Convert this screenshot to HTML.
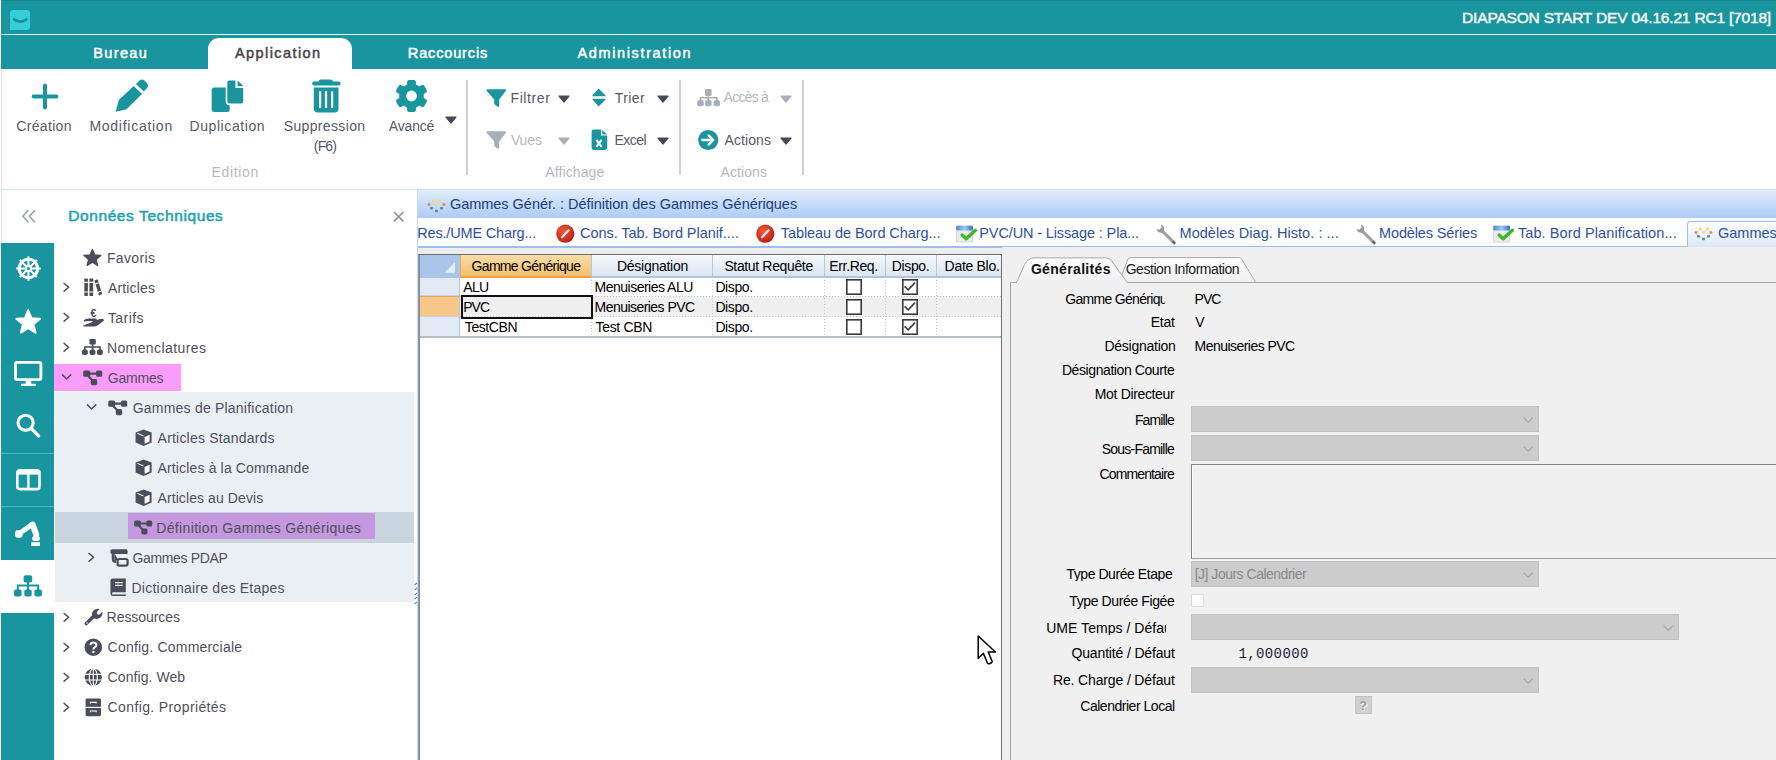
<!DOCTYPE html>
<html><head><meta charset="utf-8"><style>
*{margin:0;padding:0;box-sizing:border-box}
html,body{width:1776px;height:760px;overflow:hidden;background:#fff;position:relative}
.a{position:absolute}
.t{position:absolute;white-space:nowrap}
svg{position:absolute;overflow:visible}
</style></head><body>
<div class="a" style="left:1px;top:0px;width:1775px;height:34px;background:#1995a0;"></div>
<div class="a" style="left:1px;top:0px;width:1775px;height:1px;background:#17858f;"></div>
<div class="a" style="left:1px;top:34px;width:1775px;height:1px;background:#eef7f7;"></div>
<div class="a" style="left:1px;top:35px;width:1775px;height:34px;background:#1995a0;"></div>
<div class="a" style="left:10px;top:10px;width:20px;height:20px;background:#34cddc;border-radius:3px 3px 3px 0"></div>
<svg style="left:13px;top:18px;" width="15" height="6" viewBox="0 0 15 6"><path d="M1 1.4 Q7.2 5.8 13.6 1.4" stroke="#1a8e98" stroke-width="2.6" fill="none" stroke-linecap="round"/></svg>
<div class="a" style="left:208px;top:38px;width:144px;height:31px;background:#fff;border-radius:11px 11px 0 0"></div>
<div class="a" style="left:1px;top:189px;width:1775px;height:1px;background:#d6e2ec;"></div>
<div class="a" style="left:1px;top:69px;width:1px;height:691px;background:#e3e3e8;"></div>
<svg style="left:31px;top:83px;" width="28" height="28" viewBox="0 0 28 28"><path d="M14 2.4V24.6M2.6 13.5H25.4" stroke="#1995a0" stroke-width="4" stroke-linecap="round"/></svg>
<svg style="left:115px;top:79px;" width="34" height="34" viewBox="0 0 34 34"><path d="M0.6 32.7 L3.7 21.6 Q4 20.8 4.6 20.3 L18.7 7.0 L27 15.0 L12.3 29.6 Q11.7 30.2 10.9 30.4 Z" fill="#1995a0"/><path d="M20.9 4.9 L25 1.3 Q27.2 -0.4 29.3 1.5 L32.3 4.6 Q34.1 6.7 32.3 8.7 L28.7 12.5 Z" fill="#1995a0"/></svg>
<svg style="left:211px;top:79px;" width="34" height="34" viewBox="0 0 34 34"><rect x="0.7" y="8.5" width="18" height="24.5" rx="2.5" fill="#1995a0"/><path d="M16.2 1.0 Q16.2 0.6 17.5 0.6 H25.2 V8.3 H33 V22.6 Q33 25.4 30.5 25.4 H18.5 Q15.5 25.4 15.5 22.6 V3.3 Q15.5 0.6 18.2 0.6 Z" fill="#1995a0" stroke="#fff" stroke-width="1.6"/><path d="M26.6 1.4 L32.4 7.0 H26.6 Z" fill="#1995a0"/></svg>
<svg style="left:311px;top:79px;" width="31" height="34" viewBox="0 0 31 34"><path d="M7.6 2.6 Q8 0.6 10 0.6 H19.5 Q21.6 0.6 22 2.6 H28 Q29.6 2.6 29.6 4.6 Q29.6 6.6 28 6.6 H2.8 Q1.2 6.6 1.2 4.6 Q1.2 2.6 2.8 2.6 Z" fill="#1995a0"/><path d="M2.8 8.4 H27.5 V29.5 Q27.5 33.4 23.5 33.4 H6.8 Q2.8 33.4 2.8 29.5 Z" fill="#1995a0"/><path d="M9.1 12.2V28.9M15.0 12.2V28.9M21.1 12.2V28.9" stroke="#fff" stroke-width="2.2"/></svg>
<svg style="left:395px;top:79px;" width="34" height="34" viewBox="0 0 34 34"><circle cx="16.5" cy="17" r="12.3" fill="#1995a0"/><rect x="12.1" y="0.8999999999999986" width="8.8" height="8" rx="2" fill="#1995a0" transform="rotate(0 16.5 17)"/><rect x="12.1" y="0.8999999999999986" width="8.8" height="8" rx="2" fill="#1995a0" transform="rotate(60 16.5 17)"/><rect x="12.1" y="0.8999999999999986" width="8.8" height="8" rx="2" fill="#1995a0" transform="rotate(120 16.5 17)"/><rect x="12.1" y="0.8999999999999986" width="8.8" height="8" rx="2" fill="#1995a0" transform="rotate(180 16.5 17)"/><rect x="12.1" y="0.8999999999999986" width="8.8" height="8" rx="2" fill="#1995a0" transform="rotate(240 16.5 17)"/><rect x="12.1" y="0.8999999999999986" width="8.8" height="8" rx="2" fill="#1995a0" transform="rotate(300 16.5 17)"/><circle cx="16.5" cy="17" r="5.4" fill="#fff"/></svg>
<svg style="left:445px;top:116px;" width="12" height="8" viewBox="0 0 12 8"><path d="M1 1 H11 L6.0 7 Z" fill="#464a56" stroke="#464a56" stroke-width="1.2" stroke-linejoin="round"/></svg>
<svg style="left:558px;top:95px;" width="12" height="8" viewBox="0 0 12 8"><path d="M1 1 H11 L6.0 7 Z" fill="#464a56" stroke="#464a56" stroke-width="1.2" stroke-linejoin="round"/></svg>
<svg style="left:657px;top:95px;" width="12" height="8" viewBox="0 0 12 8"><path d="M1 1 H11 L6.0 7 Z" fill="#464a56" stroke="#464a56" stroke-width="1.2" stroke-linejoin="round"/></svg>
<svg style="left:558px;top:137px;" width="12" height="8" viewBox="0 0 12 8"><path d="M1 1 H11 L6.0 7 Z" fill="#a9aeb8" stroke="#a9aeb8" stroke-width="1.2" stroke-linejoin="round"/></svg>
<svg style="left:657px;top:137px;" width="12" height="8" viewBox="0 0 12 8"><path d="M1 1 H11 L6.0 7 Z" fill="#464a56" stroke="#464a56" stroke-width="1.2" stroke-linejoin="round"/></svg>
<svg style="left:780px;top:95px;" width="12" height="8" viewBox="0 0 12 8"><path d="M1 1 H11 L6.0 7 Z" fill="#a9aeb8" stroke="#a9aeb8" stroke-width="1.2" stroke-linejoin="round"/></svg>
<svg style="left:780px;top:137px;" width="12" height="8" viewBox="0 0 12 8"><path d="M1 1 H11 L6.0 7 Z" fill="#464a56" stroke="#464a56" stroke-width="1.2" stroke-linejoin="round"/></svg>
<div class="a" style="left:466px;top:80px;width:2px;height:95px;background:#cdd0d6;"></div>
<div class="a" style="left:679px;top:80px;width:2px;height:95px;background:#cdd0d6;"></div>
<div class="a" style="left:802px;top:80px;width:2px;height:95px;background:#cdd0d6;"></div>
<svg style="left:486px;top:88.6px;" width="22" height="19" viewBox="0 0 22 19"><path d="M1.2 0.2 H19.2 Q20.6 0.4 19.9 1.8 L13.2 10.6 V16.4 Q13 18.4 11.3 17.4 L8.6 15.2 Q8.2 14.8 8.2 14.2 V10.6 L0.6 1.8 Q-0.1 0.4 1.2 0.2 Z" fill="#1995a0"/></svg>
<svg style="left:486px;top:130.6px;" width="22" height="19" viewBox="0 0 22 19"><path d="M1.2 0.2 H19.2 Q20.6 0.4 19.9 1.8 L13.2 10.6 V16.4 Q13 18.4 11.3 17.4 L8.6 15.2 Q8.2 14.8 8.2 14.2 V10.6 L0.6 1.8 Q-0.1 0.4 1.2 0.2 Z" fill="#a9aeb8"/></svg>
<svg style="left:592px;top:88px;" width="15" height="19" viewBox="0 0 15 19"><path d="M6.6 0.4 L13.6 7.4 Q14 8.3 13 8.3 H1 Q0 8.3 0.5 7.4 Z M6.6 18.4 L13.6 11.4 Q14 10.7 13 10.7 H1 Q0 10.7 0.5 11.4 Z" fill="#1995a0"/></svg>
<svg style="left:591px;top:129px;" width="17" height="22" viewBox="0 0 17 22"><path d="M2.4 0.6 H10 V6.4 H16.2 V18.6 Q16.2 21 13.8 21 H2.4 Q0.6 21 0.6 18.6 V3 Q0.6 0.6 2.4 0.6 Z" fill="#1995a0"/><path d="M11.3 0.9 L16 5.4 H11.3 Z" fill="#1995a0"/><path d="M5.4 10.8 L10.6 17.8 M10.6 10.8 L5.4 17.8" stroke="#fff" stroke-width="2.1"/></svg>
<svg style="left:697px;top:89px;" width="24" height="19" viewBox="0 0 24 19"><g fill="#a9aeb8"><rect x="8" y="0" width="6.6" height="6.9" rx="1.3"/><rect x="0.2" y="11" width="6.6" height="6.2" rx="2"/><rect x="8.2" y="11" width="6.4" height="6.2" rx="2"/><rect x="16.6" y="11" width="6.4" height="6.2" rx="2"/></g><path d="M11.3 6.5V11.5M3.5 12V8.8H19.8V12" stroke="#a9aeb8" stroke-width="1.6" fill="none"/></svg>
<svg style="left:697px;top:129px;" width="23" height="23" viewBox="0 0 23 23"><circle cx="11.2" cy="11" r="10.1" fill="#1995a0"/><path d="M5.2 11H16M11.6 6.4L16.2 11L11.6 15.6" stroke="#fff" stroke-width="2.3" fill="none" stroke-linecap="round" stroke-linejoin="round"/></svg>
<div class="a" style="left:1px;top:243px;width:53px;height:517px;background:#1995a0;"></div>
<div class="a" style="left:1px;top:560px;width:53px;height:53px;background:#ffffff;"></div>
<div class="a" style="left:1px;top:453px;width:53px;height:1px;background:#56b3bb;"></div>
<div class="a" style="left:1px;top:506px;width:53px;height:1px;background:#56b3bb;"></div>
<svg style="left:16px;top:256px;" width="25" height="25" viewBox="0 0 25 25"><g stroke="#fff" fill="none"><circle cx="12.4" cy="12.5" r="9.2" stroke-width="3"/><line x1="12.4" y1="12.5" x2="24.60" y2="12.50" stroke-width="2.1"/><line x1="12.4" y1="12.5" x2="21.03" y2="21.13" stroke-width="2.1"/><line x1="12.4" y1="12.5" x2="12.40" y2="24.70" stroke-width="2.1"/><line x1="12.4" y1="12.5" x2="3.77" y2="21.13" stroke-width="2.1"/><line x1="12.4" y1="12.5" x2="0.20" y2="12.50" stroke-width="2.1"/><line x1="12.4" y1="12.5" x2="3.77" y2="3.87" stroke-width="2.1"/><line x1="12.4" y1="12.5" x2="12.40" y2="0.30" stroke-width="2.1"/><line x1="12.4" y1="12.5" x2="21.03" y2="3.87" stroke-width="2.1"/></g><circle cx="12.4" cy="12.5" r="3.6" fill="#fff"/><circle cx="12.4" cy="12.5" r="1.6" fill="#1995a0"/></svg>
<svg style="left:15px;top:308px;" width="27" height="27" viewBox="0 0 27 27"><path d="M13.20 2.00 L16.49 10.07 L25.18 10.71 L18.53 16.33 L20.61 24.79 L13.20 20.20 L5.79 24.79 L7.87 16.33 L1.22 10.71 L9.91 10.07 Z" fill="#fff" stroke="#fff" stroke-width="1.8" stroke-linejoin="round"/></svg>
<svg style="left:14px;top:361px;" width="29" height="26" viewBox="0 0 29 26"><rect x="1.5" y="1.4" width="25.4" height="17.2" rx="1.8" fill="none" stroke="#fff" stroke-width="2.9"/><rect x="11.6" y="19" width="5.6" height="4" fill="#fff"/><rect x="6.9" y="22.8" width="15" height="2.2" rx="0.8" fill="#fff"/></svg>
<svg style="left:16px;top:413px;" width="25" height="26" viewBox="0 0 25 26"><circle cx="9.6" cy="9.8" r="7.6" fill="none" stroke="#fff" stroke-width="3.1"/><path d="M15.2 15.5 L22.6 22.9" stroke="#fff" stroke-width="3.4" stroke-linecap="round"/></svg>
<svg style="left:16px;top:469px;" width="25" height="22" viewBox="0 0 25 22"><rect x="1.3" y="1.3" width="22.2" height="18.8" rx="2.4" fill="none" stroke="#fff" stroke-width="2.6"/><rect x="1.5" y="2" width="22" height="3.6" fill="#fff"/><path d="M12.4 4V19" stroke="#fff" stroke-width="2.4"/></svg>
<svg style="left:14px;top:519px;" width="28" height="29" viewBox="0 0 28 29"><circle cx="4.8" cy="15" r="4" fill="#fff"/><path d="M9 12 L17.6 5.8" stroke="#fff" stroke-width="5.2" stroke-linecap="round"/><path d="M18.6 5.6 L22.2 15.6" stroke="#fff" stroke-width="6" stroke-linecap="round"/><ellipse cx="22" cy="19.4" rx="4" ry="2.6" fill="#fff"/><rect x="17.2" y="23.2" width="8.8" height="3.8" fill="#fff"/></svg>
<svg style="left:14px;top:575px;" width="29" height="23" viewBox="0 0 29 23"><g fill="#1995a0"><rect x="9.6" y="0.2" width="8.6" height="7.4" rx="2"/><rect x="0" y="14.4" width="7.6" height="7.2" rx="2"/><rect x="10.3" y="14.4" width="7.4" height="7.2" rx="2"/><rect x="20.4" y="14.4" width="7.6" height="7.2" rx="2"/></g><path d="M14 7V15M3.8 15V10.6H24.2V15" stroke="#1995a0" stroke-width="2" fill="none"/></svg>
<div class="a" style="left:55px;top:392px;width:359px;height:210px;background:#eaeff3;"></div>
<div class="a" style="left:55px;top:512px;width:359px;height:31px;background:#c8d5df;"></div>
<div class="a" style="left:54px;top:364px;width:127px;height:27px;background:#fc9cfc;"></div>
<div class="a" style="left:128px;top:513px;width:247px;height:26px;background:#c497de;"></div>
<svg style="left:414px;top:582.0px;" width="4" height="4" viewBox="0 0 4 4"><path d="M0.5 3.2 L3 0.8" stroke="#3a78d8" stroke-width="1.1"/></svg>
<svg style="left:414px;top:586.8px;" width="4" height="4" viewBox="0 0 4 4"><path d="M0.5 3.2 L3 0.8" stroke="#3a78d8" stroke-width="1.1"/></svg>
<svg style="left:414px;top:591.6px;" width="4" height="4" viewBox="0 0 4 4"><path d="M0.5 3.2 L3 0.8" stroke="#3a78d8" stroke-width="1.1"/></svg>
<svg style="left:414px;top:596.4px;" width="4" height="4" viewBox="0 0 4 4"><path d="M0.5 3.2 L3 0.8" stroke="#3a78d8" stroke-width="1.1"/></svg>
<svg style="left:414px;top:601.2px;" width="4" height="4" viewBox="0 0 4 4"><path d="M0.5 3.2 L3 0.8" stroke="#3a78d8" stroke-width="1.1"/></svg>
<svg style="left:21px;top:209px;" width="16" height="15" viewBox="0 0 16 15"><path d="M7.4 1.2 L1.8 7.2 L7.4 13.2 M14 1.2 L8.4 7.2 L14 13.2" stroke="#9aa0aa" stroke-width="1.6" fill="none"/></svg>
<svg style="left:393px;top:211px;" width="12" height="12" viewBox="0 0 12 12"><path d="M1 1 L10.4 10.4 M10.4 1 L1 10.4" stroke="#8c929c" stroke-width="1.6"/></svg>
<svg style="left:62px;top:282px;" width="9" height="11" viewBox="0 0 9 11"><path d="M1.6 1 L6.6 5.3 L1.6 9.6" stroke="#4e505c" stroke-width="1.5" fill="none"/></svg>
<svg style="left:62px;top:312px;" width="9" height="11" viewBox="0 0 9 11"><path d="M1.6 1 L6.6 5.3 L1.6 9.6" stroke="#4e505c" stroke-width="1.5" fill="none"/></svg>
<svg style="left:62px;top:342px;" width="9" height="11" viewBox="0 0 9 11"><path d="M1.6 1 L6.6 5.3 L1.6 9.6" stroke="#4e505c" stroke-width="1.5" fill="none"/></svg>
<svg style="left:62px;top:612px;" width="9" height="11" viewBox="0 0 9 11"><path d="M1.6 1 L6.6 5.3 L1.6 9.6" stroke="#4e505c" stroke-width="1.5" fill="none"/></svg>
<svg style="left:62px;top:642px;" width="9" height="11" viewBox="0 0 9 11"><path d="M1.6 1 L6.6 5.3 L1.6 9.6" stroke="#4e505c" stroke-width="1.5" fill="none"/></svg>
<svg style="left:62px;top:672px;" width="9" height="11" viewBox="0 0 9 11"><path d="M1.6 1 L6.6 5.3 L1.6 9.6" stroke="#4e505c" stroke-width="1.5" fill="none"/></svg>
<svg style="left:62px;top:702px;" width="9" height="11" viewBox="0 0 9 11"><path d="M1.6 1 L6.6 5.3 L1.6 9.6" stroke="#4e505c" stroke-width="1.5" fill="none"/></svg>
<svg style="left:87px;top:552px;" width="9" height="11" viewBox="0 0 9 11"><path d="M1.6 1 L6.6 5.3 L1.6 9.6" stroke="#4e505c" stroke-width="1.5" fill="none"/></svg>
<svg style="left:61px;top:373px;" width="12" height="8" viewBox="0 0 12 8"><path d="M1 1.4 L5.6 6 L10.2 1.4" stroke="#4e505c" stroke-width="1.5" fill="none"/></svg>
<svg style="left:86px;top:403px;" width="12" height="8" viewBox="0 0 12 8"><path d="M1 1.4 L5.6 6 L10.2 1.4" stroke="#4e505c" stroke-width="1.5" fill="none"/></svg>
<svg style="left:83px;top:248px;" width="20" height="19" viewBox="0 0 20 19"><path d="M9.40 1.40 L11.69 7.04 L17.77 7.48 L13.11 11.41 L14.57 17.32 L9.40 14.10 L4.23 17.32 L5.69 11.41 L1.03 7.48 L7.11 7.04 Z" fill="#4b4d5a" stroke="#4b4d5a" stroke-width="1.4" stroke-linejoin="round"/></svg>
<svg style="left:84px;top:278px;" width="19" height="19" viewBox="0 0 19 19"><g fill="#4b4d5a"><rect x="0.3" y="0.6" width="3.6" height="17.3" rx="0.6"/><rect x="5.4" y="0.6" width="3.8" height="17.3" rx="0.6"/><path d="M10.4 2.6 L13.6 1.2 L18.2 16.2 L15 17.6 Z"/></g><path d="M0 4.4H9.6M0 14H9.6M10.8 6.2L14.6 4.8M13.6 14.6L17 13.2" stroke="#fff" stroke-width="1.1"/></svg>
<svg style="left:83px;top:308px;" width="22" height="19" viewBox="0 0 22 19"><path d="M1 13.2 Q3 10.6 7 11.2 H12.4 Q14 11.6 12.6 13 H9.4 M11 14.2 L15.6 12.2 Q19 10.8 20.4 12.2 L14.4 16.6 Q12.8 17.8 10.6 17.8 H1 Z" fill="#4b4d5a" stroke="#4b4d5a" stroke-width="1.4" stroke-linejoin="round"/><text x="7.4" y="9" font-family="Liberation Sans" font-size="10.5" font-weight="bold" fill="#4b4d5a">€</text></svg>
<svg style="left:82px;top:339px;" width="21" height="17" viewBox="0 0 21 17"><g fill="#4b4d5a"><rect x="7.4" y="0" width="6.4" height="5.6" rx="1"/><rect x="0" y="10.4" width="5.8" height="5.6" rx="1.8"/><rect x="7.6" y="10.4" width="5.8" height="5.6" rx="1.8"/><rect x="15" y="10.4" width="5.8" height="5.6" rx="1.8"/></g><path d="M10.6 5V11M2.8 11V8H18V11" stroke="#4b4d5a" stroke-width="1.6" fill="none"/></svg>
<svg style="left:83px;top:369.5px;" width="21" height="17" viewBox="0 0 21 17"><g transform="scale(1.0)"><g fill="#4b4d5a"><rect x="0.2" y="0.4" width="7" height="6.4" rx="1.6"/><rect x="13" y="0.4" width="6.2" height="6.4" rx="1.6"/><rect x="7.8" y="9" width="6.4" height="6.2" rx="1.8"/></g><path d="M5 3.6H15M4.4 5.2L10.6 11.6" stroke="#4b4d5a" stroke-width="2.2" fill="none"/></g></svg>
<svg style="left:108px;top:399.5px;" width="21" height="17" viewBox="0 0 21 17"><g transform="scale(1.0)"><g fill="#4b4d5a"><rect x="0.2" y="0.4" width="7" height="6.4" rx="1.6"/><rect x="13" y="0.4" width="6.2" height="6.4" rx="1.6"/><rect x="7.8" y="9" width="6.4" height="6.2" rx="1.8"/></g><path d="M5 3.6H15M4.4 5.2L10.6 11.6" stroke="#4b4d5a" stroke-width="2.2" fill="none"/></g></svg>
<svg style="left:134px;top:519.5px;" width="21" height="17" viewBox="0 0 21 17"><g transform="scale(0.95)"><g fill="#4b4d5a"><rect x="0.2" y="0.4" width="7" height="6.4" rx="1.6"/><rect x="13" y="0.4" width="6.2" height="6.4" rx="1.6"/><rect x="7.8" y="9" width="6.4" height="6.2" rx="1.8"/></g><path d="M5 3.6H15M4.4 5.2L10.6 11.6" stroke="#4b4d5a" stroke-width="2.2" fill="none"/></g></svg>
<svg style="left:134.5px;top:428.5px;" width="18" height="18" viewBox="0 0 18 18"><path d="M8.6 0.5 L16.6 3.6 V13.4 L8.6 17 L0.6 13.4 V3.6 Z" fill="#4b4d5a"/><path d="M9.6 8 L14.6 5.8 V12.6 L9.6 14.8 Z" fill="#fff"/><path d="M2.4 4.4 L8.6 7" stroke="#fff" stroke-width="1" fill="none"/></svg>
<svg style="left:134.5px;top:458.5px;" width="18" height="18" viewBox="0 0 18 18"><path d="M8.6 0.5 L16.6 3.6 V13.4 L8.6 17 L0.6 13.4 V3.6 Z" fill="#4b4d5a"/><path d="M9.6 8 L14.6 5.8 V12.6 L9.6 14.8 Z" fill="#fff"/><path d="M2.4 4.4 L8.6 7" stroke="#fff" stroke-width="1" fill="none"/></svg>
<svg style="left:134.5px;top:488.5px;" width="18" height="18" viewBox="0 0 18 18"><path d="M8.6 0.5 L16.6 3.6 V13.4 L8.6 17 L0.6 13.4 V3.6 Z" fill="#4b4d5a"/><path d="M9.6 8 L14.6 5.8 V12.6 L9.6 14.8 Z" fill="#fff"/><path d="M2.4 4.4 L8.6 7" stroke="#fff" stroke-width="1" fill="none"/></svg>
<svg style="left:110px;top:549px;" width="19" height="18" viewBox="0 0 19 18"><path d="M2 0.6 H16 Q17.4 0.6 17.4 2 V5 H4.4 V9.4 Q4.4 11 6 11 H8.4" stroke="#4b4d5a" stroke-width="0" fill="#4b4d5a"/><rect x="0.4" y="0.6" width="17" height="4.4" rx="1.4" fill="#4b4d5a"/><path d="M3 5 V9.4 Q3 12.6 6.2 12.6" stroke="#4b4d5a" stroke-width="2.6" fill="none"/><rect x="7.6" y="10" width="10" height="6.6" rx="1.8" fill="none" stroke="#4b4d5a" stroke-width="2.2"/></svg>
<svg style="left:110px;top:578px;" width="17" height="19" viewBox="0 0 17 19"><path d="M2.6 0.6 H15.8 V14.2 H3.2 Q2 14.2 2 15.4 Q2 16.6 3.2 16.6 H15.8 V18 H2.8 Q0.4 18 0.4 15.6 V2.8 Q0.4 0.6 2.6 0.6 Z" fill="#4b4d5a"/><path d="M5 4.6H12.6M5 7.4H12.6" stroke="#fff" stroke-width="1.3"/></svg>
<svg style="left:84px;top:608px;" width="19" height="19" viewBox="0 0 19 19"><path d="M2.2 15.6 L9.6 8.2" stroke="#4b4d5a" stroke-width="3.4" stroke-linecap="round"/><path d="M8.6 9.4 Q6.6 4.6 10.4 1.8 Q13 0.2 15.8 1 L12.6 4.2 L13.4 6.2 L15.4 6.8 L18.4 3.8 Q19 7.4 16.4 9.6 Q13.6 11.6 10.2 10.6 Z" fill="#4b4d5a"/><circle cx="3" cy="15" r="0.8" fill="#fff"/></svg>
<svg style="left:84px;top:638px;" width="19" height="19" viewBox="0 0 19 19"><circle cx="9.3" cy="9.2" r="8.7" fill="#4b4d5a"/><path d="M6.4 7.2 Q6.4 4.4 9.4 4.4 Q12.4 4.4 12.4 7 Q12.4 8.6 10.6 9.4 Q9.4 10 9.4 11.4" stroke="#fff" stroke-width="2" fill="none"/><circle cx="9.4" cy="14" r="1.3" fill="#fff"/></svg>
<svg style="left:84px;top:668px;" width="19" height="19" viewBox="0 0 19 19"><circle cx="9.3" cy="9.2" r="8.6" fill="#4b4d5a"/><path d="M0.6 6.4H18M0.6 12H18M9.3 0.6V17.8" stroke="#fff" stroke-width="1.1"/><ellipse cx="9.3" cy="9.2" rx="4" ry="8.6" fill="none" stroke="#fff" stroke-width="1.1"/></svg>
<svg style="left:85px;top:698px;" width="17" height="19" viewBox="0 0 17 19"><rect x="0.6" y="0.6" width="15.4" height="17.6" rx="1.4" fill="#4b4d5a"/><path d="M0.6 9.4H16" stroke="#fff" stroke-width="1.2"/><path d="M5.4 5.6 V4.4 H11.2 V5.6 M5.4 14.2 V13 H11.2 V14.2" stroke="#fff" stroke-width="1.1" fill="none"/></svg>
<div class="a" style="left:417px;top:190px;width:1359px;height:570px;background:#ffffff;"></div>
<div class="a" style="left:417px;top:190px;width:1px;height:570px;background:#c2daf8;"></div>
<div class="a" style="left:418px;top:190px;width:1358px;height:28px;background:linear-gradient(#e0ecfc,#acccf8);"></div>
<div class="a" style="left:418px;top:218px;width:1358px;height:28px;background:#ffffff;"></div>
<div class="a" style="left:418px;top:246px;width:1358px;height:2px;background:#9cc0f0;"></div>
<div class="a" style="left:418px;top:248px;width:1358px;height:6px;background:#ededed;"></div>
<div class="a" style="left:1687px;top:221px;width:95px;height:27px;background:linear-gradient(#fdfeff,#dce7f3);border:1px solid #9cc2f0;border-bottom:none;border-radius:4px 4px 0 0"></div>
<svg style="left:425.5px;top:198.5px;" width="21" height="14" viewBox="0 0 21 14"><g stroke="#d6d6d6" stroke-width="1" fill="none"><path d="M3 5.5L7.5 2M7.5 2L10.5 5.5L14.5 2L18 5.5M3 5.5L5.5 9.2L10.5 12L15.5 9.2L18 5.5"/></g><rect x="1.6" y="4.3" width="2.8" height="2.4" rx="0.6" fill="#e8805a"/><rect x="16.6" y="4.3" width="2.8" height="2.4" rx="0.6" fill="#e8805a"/><rect x="6.1" y="0.6000000000000001" width="2.8" height="2.4" rx="0.6" fill="#f2dc70"/><rect x="13.1" y="0.6000000000000001" width="2.8" height="2.4" rx="0.6" fill="#f2dc70"/><rect x="9.1" y="4.3" width="2.8" height="2.4" rx="0.6" fill="#f2dc70"/><rect x="4.1" y="7.999999999999999" width="2.8" height="2.4" rx="0.6" fill="#5a84a8"/><rect x="14.1" y="7.999999999999999" width="2.8" height="2.4" rx="0.6" fill="#5a84a8"/><rect x="9.1" y="10.8" width="2.8" height="2.4" rx="0.6" fill="#5a84a8"/></svg>
<svg style="left:1692.5px;top:226.5px;" width="21" height="14" viewBox="0 0 21 14"><g stroke="#d6d6d6" stroke-width="1" fill="none"><path d="M3 5.5L7.5 2M7.5 2L10.5 5.5L14.5 2L18 5.5M3 5.5L5.5 9.2L10.5 12L15.5 9.2L18 5.5"/></g><rect x="1.6" y="4.3" width="2.8" height="2.4" rx="0.6" fill="#e8805a"/><rect x="16.6" y="4.3" width="2.8" height="2.4" rx="0.6" fill="#e8805a"/><rect x="6.1" y="0.6000000000000001" width="2.8" height="2.4" rx="0.6" fill="#f2dc70"/><rect x="13.1" y="0.6000000000000001" width="2.8" height="2.4" rx="0.6" fill="#f2dc70"/><rect x="9.1" y="4.3" width="2.8" height="2.4" rx="0.6" fill="#f2dc70"/><rect x="4.1" y="7.999999999999999" width="2.8" height="2.4" rx="0.6" fill="#5a84a8"/><rect x="14.1" y="7.999999999999999" width="2.8" height="2.4" rx="0.6" fill="#5a84a8"/><rect x="9.1" y="10.8" width="2.8" height="2.4" rx="0.6" fill="#5a84a8"/></svg>
<svg style="left:556px;top:224px;" width="20" height="20" viewBox="0 0 20 20"><defs><radialGradient id="rg" cx="0.4" cy="0.35" r="0.7"><stop offset="0" stop-color="#f25a3c"/><stop offset="1" stop-color="#b81c10"/></radialGradient></defs><circle cx="9.3" cy="9.7" r="9.1" fill="url(#rg)"/><path d="M6 13.2 L12.6 6.2" stroke="#ffe8e0" stroke-width="2.2" stroke-linecap="round"/></svg>
<svg style="left:756px;top:224px;" width="20" height="20" viewBox="0 0 20 20"><defs><radialGradient id="rg" cx="0.4" cy="0.35" r="0.7"><stop offset="0" stop-color="#f25a3c"/><stop offset="1" stop-color="#b81c10"/></radialGradient></defs><circle cx="9.3" cy="9.7" r="9.1" fill="url(#rg)"/><path d="M6 13.2 L12.6 6.2" stroke="#ffe8e0" stroke-width="2.2" stroke-linecap="round"/></svg>
<svg style="left:956px;top:224.5px;" width="22" height="20" viewBox="0 0 22 20"><defs><linearGradient id="cg" x1="0" y1="0" x2="1" y2="0"><stop offset="0" stop-color="#4a8ad8"/><stop offset="0.5" stop-color="#9ccbf4"/><stop offset="1" stop-color="#2e6cc0"/></linearGradient></defs><rect x="0.5" y="1" width="16.2" height="16" fill="#ececec" stroke="#d0d0d0" stroke-width="0.8"/><rect x="0.3" y="0.8" width="16.6" height="4.6" rx="1" fill="url(#cg)"/><path d="M6.2 10 L10.2 13.8 L19.4 5.2" stroke="#3cb82c" stroke-width="3.4" fill="none" stroke-linejoin="round" stroke-linecap="round"/></svg>
<svg style="left:1492.5px;top:224.5px;" width="22" height="20" viewBox="0 0 22 20"><defs><linearGradient id="cg" x1="0" y1="0" x2="1" y2="0"><stop offset="0" stop-color="#4a8ad8"/><stop offset="0.5" stop-color="#9ccbf4"/><stop offset="1" stop-color="#2e6cc0"/></linearGradient></defs><rect x="0.5" y="1" width="16.2" height="16" fill="#ececec" stroke="#d0d0d0" stroke-width="0.8"/><rect x="0.3" y="0.8" width="16.6" height="4.6" rx="1" fill="url(#cg)"/><path d="M6.2 10 L10.2 13.8 L19.4 5.2" stroke="#3cb82c" stroke-width="3.4" fill="none" stroke-linejoin="round" stroke-linecap="round"/></svg>
<svg style="left:1155px;top:223px;" width="22" height="22" viewBox="0 0 22 22"><path d="M7.6 8.4 L18.8 19.4" stroke="#a4a4a4" stroke-width="3.2" stroke-linecap="round"/><path d="M18.4 19 L19.2 19.8" stroke="#6a6a6a" stroke-width="3" stroke-linecap="round"/><path d="M6 1.6 Q9.4 2.6 9.2 6.6 L8.6 8.6 L6.4 9.8 Q2.8 9.8 1.4 6.6 L4.6 6.4 L6.6 4.2 Z" fill="#9a9a9a"/></svg>
<svg style="left:1355px;top:223px;" width="22" height="22" viewBox="0 0 22 22"><path d="M7.6 8.4 L18.8 19.4" stroke="#a4a4a4" stroke-width="3.2" stroke-linecap="round"/><path d="M18.4 19 L19.2 19.8" stroke="#6a6a6a" stroke-width="3" stroke-linecap="round"/><path d="M6 1.6 Q9.4 2.6 9.2 6.6 L8.6 8.6 L6.4 9.8 Q2.8 9.8 1.4 6.6 L4.6 6.4 L6.6 4.2 Z" fill="#9a9a9a"/></svg>
<div class="a" style="left:418px;top:254px;width:584px;height:506px;background:#ffffff;border-left:1px solid #8c9cb2;border-top:1px solid #6c6c6c;border-right:1px solid #707070"></div>
<div class="a" style="left:419px;top:255px;width:1px;height:505px;background:#8a8a8a;"></div>
<div class="a" style="left:420px;top:255px;width:40px;height:23px;background:#a9c5ea;"></div>
<svg style="left:444px;top:262px;" width="12" height="11" viewBox="0 0 12 11"><path d="M11 0.2 V10.8 H0.4 Z" fill="#e4eefa"/></svg>
<div class="a" style="left:460px;top:255px;width:131px;height:23px;background:linear-gradient(#f9dca8,#f2c070);border-left:1px solid #f0a848;border-bottom:2px solid #f0a040"></div>
<div class="a" style="left:591px;top:255px;width:121px;height:23px;background:linear-gradient(#f6f9fd,#dbe5f1);border-left:1px solid #b4c8de;border-bottom:2px solid #b0c4dc"></div>
<div class="a" style="left:712px;top:255px;width:112px;height:23px;background:linear-gradient(#f6f9fd,#dbe5f1);border-left:1px solid #b4c8de;border-bottom:2px solid #b0c4dc"></div>
<div class="a" style="left:824px;top:255px;width:61px;height:23px;background:linear-gradient(#f6f9fd,#dbe5f1);border-left:1px solid #b4c8de;border-bottom:2px solid #b0c4dc"></div>
<div class="a" style="left:885px;top:255px;width:51px;height:23px;background:linear-gradient(#f6f9fd,#dbe5f1);border-left:1px solid #b4c8de;border-bottom:2px solid #b0c4dc"></div>
<div class="a" style="left:936px;top:255px;width:65px;height:23px;background:linear-gradient(#f6f9fd,#dbe5f1);border-left:1px solid #b4c8de;border-bottom:2px solid #b0c4dc"></div>
<div class="a" style="left:420px;top:278px;width:40px;height:18px;background:#e1e9f5;border-right:1px solid #b8c8dc;border-bottom:1px solid #c8d4e4"></div>
<div class="a" style="left:420px;top:296px;width:40px;height:21px;background:#f8c88a;border-right:1px solid #b8c8dc;border-top:1px solid #f0a850;border-bottom:1px solid #c8d4e4"></div>
<div class="a" style="left:420px;top:317px;width:40px;height:19px;background:#e1e9f5;border-right:1px solid #b8c8dc"></div>
<div class="a" style="left:460px;top:296px;width:541px;height:21px;background:#efefef;"></div>
<div class="a" style="left:460px;top:296px;width:541px;height:1px;background:repeating-linear-gradient(90deg,#c8c8c8 0 1px,transparent 1px 3px);"></div>
<div class="a" style="left:460px;top:316px;width:541px;height:1px;background:repeating-linear-gradient(90deg,#c8c8c8 0 1px,transparent 1px 3px);"></div>
<div class="a" style="left:591px;top:277px;width:1px;height:59px;background:repeating-linear-gradient(180deg,#c8c8c8 0 1px,transparent 1px 3px);"></div>
<div class="a" style="left:712px;top:277px;width:1px;height:59px;background:repeating-linear-gradient(180deg,#c8c8c8 0 1px,transparent 1px 3px);"></div>
<div class="a" style="left:824px;top:277px;width:1px;height:59px;background:repeating-linear-gradient(180deg,#c8c8c8 0 1px,transparent 1px 3px);"></div>
<div class="a" style="left:885px;top:277px;width:1px;height:59px;background:repeating-linear-gradient(180deg,#c8c8c8 0 1px,transparent 1px 3px);"></div>
<div class="a" style="left:936px;top:277px;width:1px;height:59px;background:repeating-linear-gradient(180deg,#c8c8c8 0 1px,transparent 1px 3px);"></div>
<div class="a" style="left:420px;top:336px;width:581px;height:2px;background:#b8bcc4;"></div>
<div class="a" style="left:461px;top:295px;width:132px;height:24px;background:transparent;border:2.5px solid #111"></div>
<svg style="left:846px;top:279px;" width="16" height="16" viewBox="0 0 16 16"><rect x="0.8" y="0.8" width="14.4" height="14.4" fill="#fff" stroke="#3a3a3a" stroke-width="1.6"/></svg>
<svg style="left:902px;top:279px;" width="16" height="16" viewBox="0 0 16 16"><rect x="0.8" y="0.8" width="14.4" height="14.4" fill="#fff" stroke="#3a3a3a" stroke-width="1.6"/><path d="M2.6 7.4 L6.2 10.8 L13 3.6" stroke="#444" stroke-width="1.8" fill="none"/></svg>
<svg style="left:846px;top:299px;" width="16" height="16" viewBox="0 0 16 16"><rect x="0.8" y="0.8" width="14.4" height="14.4" fill="#fff" stroke="#3a3a3a" stroke-width="1.6"/></svg>
<svg style="left:902px;top:299px;" width="16" height="16" viewBox="0 0 16 16"><rect x="0.8" y="0.8" width="14.4" height="14.4" fill="#fff" stroke="#3a3a3a" stroke-width="1.6"/><path d="M2.6 7.4 L6.2 10.8 L13 3.6" stroke="#444" stroke-width="1.8" fill="none"/></svg>
<svg style="left:846px;top:319px;" width="16" height="16" viewBox="0 0 16 16"><rect x="0.8" y="0.8" width="14.4" height="14.4" fill="#fff" stroke="#3a3a3a" stroke-width="1.6"/></svg>
<svg style="left:902px;top:319px;" width="16" height="16" viewBox="0 0 16 16"><rect x="0.8" y="0.8" width="14.4" height="14.4" fill="#fff" stroke="#3a3a3a" stroke-width="1.6"/><path d="M2.6 7.4 L6.2 10.8 L13 3.6" stroke="#444" stroke-width="1.8" fill="none"/></svg>
<div class="a" style="left:1002px;top:247px;width:774px;height:513px;background:#f0f0f0;"></div>
<div class="a" style="left:1002px;top:247px;width:774px;height:513px;background:#f0f0f0;"></div>
<div class="a" style="left:1010px;top:282px;width:766px;height:478px;background:#f0f0f0;border-left:1px solid #a0a0a0;border-top:1px solid #a8a8a8"></div>
<svg style="left:1005px;top:255px;" width="260" height="30" viewBox="0 0 260 30"><defs><linearGradient id="tg" x1="0" y1="0" x2="0" y2="1"><stop offset="0" stop-color="#ffffff"/><stop offset="1" stop-color="#f0f0f0"/></linearGradient></defs><path d="M114.5 27 L123 3.8 Q124 2.6 126 2.6 H233.6 Q235.4 2.6 236.4 3.8 L250.5 27" fill="url(#tg)" stroke="#a8a8a8" stroke-width="1"/><path d="M11.5 27.5 L19.5 9.6 Q23 3 29 2.9 H101 Q104.2 2.9 106.2 5.4 L122.3 27.5" fill="url(#tg)" stroke="#a8a8a8" stroke-width="1"/><rect x="12.2" y="26.6" width="109.5" height="3" fill="#f0f0f0"/></svg>
<div class="a" style="left:1191px;top:406px;width:348px;height:26px;background:#cccccc;border:1px solid #c2c2c2"></div><svg style="left:1522.5px;top:416.5px;" width="12" height="7" viewBox="0 0 12 7"><path d="M0.6 0.6 L5.2 5.2 L9.8 0.6" stroke="#a6a6a6" stroke-width="1.2" fill="none"/></svg>
<div class="a" style="left:1191px;top:435px;width:348px;height:26px;background:#cccccc;border:1px solid #c2c2c2"></div><svg style="left:1522.5px;top:445.5px;" width="12" height="7" viewBox="0 0 12 7"><path d="M0.6 0.6 L5.2 5.2 L9.8 0.6" stroke="#a6a6a6" stroke-width="1.2" fill="none"/></svg>
<div class="a" style="left:1191px;top:561px;width:348px;height:26px;background:#cccccc;border:1px solid #c2c2c2"></div><svg style="left:1522.5px;top:571.5px;" width="12" height="7" viewBox="0 0 12 7"><path d="M0.6 0.6 L5.2 5.2 L9.8 0.6" stroke="#a6a6a6" stroke-width="1.2" fill="none"/></svg>
<div class="a" style="left:1191px;top:614px;width:488px;height:26px;background:#cccccc;border:1px solid #c2c2c2"></div><svg style="left:1662.5px;top:624.5px;" width="12" height="7" viewBox="0 0 12 7"><path d="M0.6 0.6 L5.2 5.2 L9.8 0.6" stroke="#a6a6a6" stroke-width="1.2" fill="none"/></svg>
<div class="a" style="left:1191px;top:667px;width:348px;height:26px;background:#cccccc;border:1px solid #c2c2c2"></div><svg style="left:1522.5px;top:677.5px;" width="12" height="7" viewBox="0 0 12 7"><path d="M0.6 0.6 L5.2 5.2 L9.8 0.6" stroke="#a6a6a6" stroke-width="1.2" fill="none"/></svg>
<div class="a" style="left:1191px;top:464px;width:600px;height:95px;background:#f0f0f0;border-top:1px solid #828282;border-left:1px solid #828282;border-bottom:1px solid #a0a0a0;box-shadow:inset 1px 1px 0 #fbfbfb"></div>
<div class="a" style="left:1191px;top:594px;width:13px;height:13px;background:#ffffff;border:1px solid #dcdcdc"></div>
<div class="a" style="left:1355px;top:696px;width:17px;height:18px;background:#cfcfcf;border:1px solid #c4c4c4"></div>
<svg style="left:1358px;top:698px;" width="12" height="15" viewBox="0 0 12 15"><text x="2.2" y="13" font-family="Liberation Sans" font-weight="bold" font-size="13" fill="#ffffff">?</text><text x="1.2" y="12" font-family="Liberation Sans" font-weight="bold" font-size="13" fill="#9c9c9c">?</text></svg>
<svg style="left:977px;top:635px;" width="19" height="31" viewBox="0 0 19 31"><path d="M1.2 1 V23.4 L6.4 18.4 L10.4 28 Q11 29.2 12.2 28.7 L14.4 27.8 Q15.4 27.2 15 26 L11.2 17 H18.4 Z" fill="#fff" stroke="#000" stroke-width="1.5" stroke-linejoin="round"/></svg>
<div class="t" style="left:1462.10px;top:10.25px;font:normal 15.5px/15.5px 'Liberation Sans';color:#f4f6ee;-webkit-text-stroke:0.5px #f4f6ee;letter-spacing:-0.185px">DIAPASON START DEV 04.16.21 RC1 [7018]</div>
<div class="t" style="left:93.20px;top:46.15px;font:normal 14.5px/14.5px 'Liberation Sans';color:#ffffff;-webkit-text-stroke:0.5px #ffffff;letter-spacing:1.381px">Bureau</div>
<div class="t" style="left:235.00px;top:45.95px;font:normal 14.5px/14.5px 'Liberation Sans';color:#4a4450;-webkit-text-stroke:0.5px #4a4450;letter-spacing:1.413px">Application</div>
<div class="t" style="left:407.80px;top:46.15px;font:normal 14.5px/14.5px 'Liberation Sans';color:#ffffff;-webkit-text-stroke:0.5px #ffffff;letter-spacing:0.860px">Raccourcis</div>
<div class="t" style="left:577.50px;top:46.15px;font:normal 14.5px/14.5px 'Liberation Sans';color:#ffffff;-webkit-text-stroke:0.5px #ffffff;letter-spacing:1.630px">Administration</div>
<div class="t" style="left:16.30px;top:119.00px;font:normal 14px/14px 'Liberation Sans';color:#555a68;letter-spacing:0.324px">Création</div>
<div class="t" style="left:89.40px;top:118.80px;font:normal 14px/14px 'Liberation Sans';color:#555a68;letter-spacing:0.735px">Modification</div>
<div class="t" style="left:189.50px;top:118.80px;font:normal 14px/14px 'Liberation Sans';color:#555a68;letter-spacing:0.582px">Duplication</div>
<div class="t" style="left:283.70px;top:118.80px;font:normal 14px/14px 'Liberation Sans';color:#555a68;letter-spacing:0.356px">Suppression</div>
<div class="t" style="left:313.80px;top:138.50px;font:normal 14px/14px 'Liberation Sans';color:#555a68;letter-spacing:-0.833px">(F6)</div>
<div class="t" style="left:388.80px;top:118.80px;font:normal 14px/14px 'Liberation Sans';color:#555a68;letter-spacing:-0.171px">Avancé</div>
<div class="t" style="left:211.50px;top:165.40px;font:normal 14px/14px 'Liberation Sans';color:#b5b9c3;letter-spacing:0.663px">Edition</div>
<div class="t" style="left:510.50px;top:90.60px;font:normal 14px/14px 'Liberation Sans';color:#555a68;letter-spacing:0.598px">Filtrer</div>
<div class="t" style="left:614.80px;top:90.60px;font:normal 14px/14px 'Liberation Sans';color:#555a68;letter-spacing:0.402px">Trier</div>
<div class="t" style="left:510.90px;top:132.50px;font:normal 14px/14px 'Liberation Sans';color:#b5b9c3;letter-spacing:-0.097px">Vues</div>
<div class="t" style="left:614.60px;top:132.50px;font:normal 14px/14px 'Liberation Sans';color:#555a68;letter-spacing:-0.581px">Excel</div>
<div class="t" style="left:723.60px;top:90.40px;font:normal 14px/14px 'Liberation Sans';color:#b5b9c3;letter-spacing:-0.752px">Accès à</div>
<div class="t" style="left:724.50px;top:132.50px;font:normal 14px/14px 'Liberation Sans';color:#555a68;letter-spacing:0.098px">Actions</div>
<div class="t" style="left:545.30px;top:165.40px;font:normal 14px/14px 'Liberation Sans';color:#b5b9c3;letter-spacing:0.108px">Affichage</div>
<div class="t" style="left:720.50px;top:165.40px;font:normal 14px/14px 'Liberation Sans';color:#b5b9c3;letter-spacing:0.098px">Actions</div>
<div class="t" style="left:68.20px;top:208.15px;font:normal 15.5px/15.5px 'Liberation Sans';color:#22a0ae;-webkit-text-stroke:0.5px #22a0ae;letter-spacing:0.599px">Données Techniques</div>
<div class="t" style="left:106.90px;top:250.60px;font:normal 14px/14px 'Liberation Sans';color:#4e505c;letter-spacing:0.351px">Favoris</div>
<div class="t" style="left:107.90px;top:280.50px;font:normal 14px/14px 'Liberation Sans';color:#4e505c;letter-spacing:0.158px">Articles</div>
<div class="t" style="left:107.90px;top:310.50px;font:normal 14px/14px 'Liberation Sans';color:#4e505c;letter-spacing:0.430px">Tarifs</div>
<div class="t" style="left:106.90px;top:340.50px;font:normal 14px/14px 'Liberation Sans';color:#4e505c;letter-spacing:0.404px">Nomenclatures</div>
<div class="t" style="left:107.80px;top:370.50px;font:normal 14px/14px 'Liberation Sans';color:#4e505c;letter-spacing:-0.217px">Gammes</div>
<div class="t" style="left:132.70px;top:400.50px;font:normal 14px/14px 'Liberation Sans';color:#4e505c;letter-spacing:0.216px">Gammes de Planification</div>
<div class="t" style="left:157.60px;top:430.50px;font:normal 14px/14px 'Liberation Sans';color:#4e505c;letter-spacing:0.200px">Articles Standards</div>
<div class="t" style="left:157.50px;top:460.50px;font:normal 14px/14px 'Liberation Sans';color:#4e505c;letter-spacing:0.151px">Articles à la Commande</div>
<div class="t" style="left:157.50px;top:490.50px;font:normal 14px/14px 'Liberation Sans';color:#4e505c;letter-spacing:0.090px">Articles au Devis</div>
<div class="t" style="left:156.30px;top:520.50px;font:normal 14px/14px 'Liberation Sans';color:#4e505c;letter-spacing:0.340px">Définition Gammes Génériques</div>
<div class="t" style="left:132.50px;top:550.50px;font:normal 14px/14px 'Liberation Sans';color:#4e505c;letter-spacing:-0.346px">Gammes PDAP</div>
<div class="t" style="left:131.50px;top:580.50px;font:normal 14px/14px 'Liberation Sans';color:#4e505c;letter-spacing:0.234px">Dictionnaire des Etapes</div>
<div class="t" style="left:106.60px;top:610.30px;font:normal 14px/14px 'Liberation Sans';color:#4e505c;letter-spacing:-0.057px">Ressources</div>
<div class="t" style="left:107.60px;top:640.30px;font:normal 14px/14px 'Liberation Sans';color:#4e505c;letter-spacing:0.204px">Config. Commerciale</div>
<div class="t" style="left:107.60px;top:670.30px;font:normal 14px/14px 'Liberation Sans';color:#4e505c;letter-spacing:0.070px">Config. Web</div>
<div class="t" style="left:107.60px;top:700.30px;font:normal 14px/14px 'Liberation Sans';color:#4e505c;letter-spacing:0.373px">Config. Propriétés</div>
<div class="t" style="left:449.90px;top:197.45px;font:normal 14.5px/14.5px 'Liberation Sans';color:#1e3c78;letter-spacing:-0.019px">Gammes Génér. : Définition des Gammes Génériques</div>
<div class="t" style="left:417.20px;top:226.45px;font:normal 14.5px/14.5px 'Liberation Sans';color:#2f4fa3;letter-spacing:-0.165px">Res./UME Charg...</div>
<div class="t" style="left:580.00px;top:226.45px;font:normal 14.5px/14.5px 'Liberation Sans';color:#2f4fa3;letter-spacing:-0.054px">Cons. Tab. Bord Planif....</div>
<div class="t" style="left:780.70px;top:226.45px;font:normal 14.5px/14.5px 'Liberation Sans';color:#2f4fa3;letter-spacing:-0.060px">Tableau de Bord Charg...</div>
<div class="t" style="left:979.30px;top:226.45px;font:normal 14.5px/14.5px 'Liberation Sans';color:#2f4fa3;letter-spacing:-0.127px">PVC/UN - Lissage : Pla...</div>
<div class="t" style="left:1179.50px;top:226.45px;font:normal 14.5px/14.5px 'Liberation Sans';color:#2f4fa3;letter-spacing:0.051px">Modèles Diag. Histo. : ...</div>
<div class="t" style="left:1379.00px;top:226.45px;font:normal 14.5px/14.5px 'Liberation Sans';color:#2f4fa3;letter-spacing:-0.130px">Modèles Séries</div>
<div class="t" style="left:1517.90px;top:226.45px;font:normal 14.5px/14.5px 'Liberation Sans';color:#2f4fa3;letter-spacing:0.099px">Tab. Bord Planification...</div>
<div class="t" style="left:1718.00px;top:226.45px;font:normal 14.5px/14.5px 'Liberation Sans';color:#2f4fa3">Gammes</div>
<div class="t" style="left:471.60px;top:259.30px;font:normal 14px/14px 'Liberation Sans';color:#000000;letter-spacing:-0.691px">Gamme Générique</div>
<div class="t" style="left:617.00px;top:259.30px;font:normal 14px/14px 'Liberation Sans';color:#000000;letter-spacing:-0.275px">Désignation</div>
<div class="t" style="left:724.40px;top:259.30px;font:normal 14px/14px 'Liberation Sans';color:#000000;letter-spacing:-0.355px">Statut Requête</div>
<div class="t" style="left:829.30px;top:259.30px;font:normal 14px/14px 'Liberation Sans';color:#000000;letter-spacing:-0.352px">Err.Req.</div>
<div class="t" style="left:891.80px;top:259.30px;font:normal 14px/14px 'Liberation Sans';color:#000000;letter-spacing:-0.359px">Dispo.</div>
<div class="t" style="left:944.60px;top:259.30px;font:normal 14px/14px 'Liberation Sans';color:#000000;letter-spacing:-0.300px">Date Blo.</div>
<div class="t" style="left:463.30px;top:280.20px;font:normal 14px/14px 'Liberation Sans';color:#000000;letter-spacing:-0.662px">ALU</div>
<div class="t" style="left:463.20px;top:300.20px;font:normal 14px/14px 'Liberation Sans';color:#000000;letter-spacing:-0.938px">PVC</div>
<div class="t" style="left:464.80px;top:320.00px;font:normal 14px/14px 'Liberation Sans';color:#000000;letter-spacing:-0.421px">TestCBN</div>
<div class="t" style="left:594.60px;top:280.20px;font:normal 14px/14px 'Liberation Sans';color:#000000;letter-spacing:-0.506px">Menuiseries ALU</div>
<div class="t" style="left:594.60px;top:300.20px;font:normal 14px/14px 'Liberation Sans';color:#000000;letter-spacing:-0.546px">Menuiseries PVC</div>
<div class="t" style="left:595.60px;top:320.00px;font:normal 14px/14px 'Liberation Sans';color:#000000;letter-spacing:-0.345px">Test CBN</div>
<div class="t" style="left:715.40px;top:280.20px;font:normal 14px/14px 'Liberation Sans';color:#000000;letter-spacing:-0.399px">Dispo.</div>
<div class="t" style="left:715.40px;top:300.20px;font:normal 14px/14px 'Liberation Sans';color:#000000;letter-spacing:-0.399px">Dispo.</div>
<div class="t" style="left:715.40px;top:320.00px;font:normal 14px/14px 'Liberation Sans';color:#000000;letter-spacing:-0.399px">Dispo.</div>
<div class="t" style="left:1030.90px;top:262.30px;font:bold 14px/14px 'Liberation Sans';color:#111111;letter-spacing:0.332px">Généralités</div>
<div class="t" style="left:1125.70px;top:262.30px;font:normal 14px/14px 'Liberation Sans';color:#1a1a1a;letter-spacing:-0.460px">Gestion Information</div>
<div class="t" style="left:1065.30px;top:292.00px;font:normal 14px/14px 'Liberation Sans';color:#000000;letter-spacing:-0.691px;width:99.70px;overflow:hidden">Gamme Générique</div>
<div class="t" style="left:1150.70px;top:315.30px;font:normal 14px/14px 'Liberation Sans';color:#000000;letter-spacing:-0.238px">Etat</div>
<div class="t" style="left:1104.50px;top:339.00px;font:normal 14px/14px 'Liberation Sans';color:#000000;letter-spacing:-0.265px">Désignation</div>
<div class="t" style="left:1061.90px;top:363.00px;font:normal 14px/14px 'Liberation Sans';color:#000000;letter-spacing:-0.410px">Désignation Courte</div>
<div class="t" style="left:1094.80px;top:386.60px;font:normal 14px/14px 'Liberation Sans';color:#000000;letter-spacing:-0.347px">Mot Directeur</div>
<div class="t" style="left:1134.90px;top:412.90px;font:normal 14px/14px 'Liberation Sans';color:#000000;letter-spacing:-0.872px">Famille</div>
<div class="t" style="left:1101.80px;top:441.70px;font:normal 14px/14px 'Liberation Sans';color:#000000;letter-spacing:-0.791px">Sous-Famille</div>
<div class="t" style="left:1099.50px;top:467.40px;font:normal 14px/14px 'Liberation Sans';color:#000000;letter-spacing:-0.874px">Commentaire</div>
<div class="t" style="left:1066.40px;top:567.20px;font:normal 14px/14px 'Liberation Sans';color:#000000;letter-spacing:-0.437px;width:106.60px;overflow:hidden">Type Durée Etape</div>
<div class="t" style="left:1069.25px;top:594.30px;font:normal 14px/14px 'Liberation Sans';color:#000000;letter-spacing:-0.383px">Type Durée Figée</div>
<div class="t" style="left:1046.20px;top:620.50px;font:normal 14px/14px 'Liberation Sans';color:#000000;letter-spacing:0.043px;width:119.80px;overflow:hidden">UME Temps / Défaut</div>
<div class="t" style="left:1071.50px;top:646.00px;font:normal 14px/14px 'Liberation Sans';color:#000000;letter-spacing:-0.153px">Quantité / Défaut</div>
<div class="t" style="left:1053.00px;top:673.00px;font:normal 14px/14px 'Liberation Sans';color:#000000;letter-spacing:-0.146px">Re. Charge / Défaut</div>
<div class="t" style="left:1080.25px;top:699.00px;font:normal 14px/14px 'Liberation Sans';color:#000000;letter-spacing:-0.472px">Calendrier Local</div>
<div class="t" style="left:1194.60px;top:292.00px;font:normal 14px/14px 'Liberation Sans';color:#000000;letter-spacing:-1.038px">PVC</div>
<div class="t" style="left:1195.20px;top:315.30px;font:normal 14px/14px 'Liberation Sans';color:#000000">V</div>
<div class="t" style="left:1194.60px;top:339.00px;font:normal 14px/14px 'Liberation Sans';color:#000000;letter-spacing:-0.539px">Menuiseries PVC</div>
<div class="t" style="left:1194.70px;top:567.20px;font:normal 14px/14px 'Liberation Sans';color:#8a8a8a;letter-spacing:-0.496px">[J] Jours Calendrier</div>
<div class="t" style="left:1238.40px;top:646.90px;font:normal 14px/14px 'Liberation Mono';color:#202040;letter-spacing:0.399px">1,000000</div>
</body></html>
